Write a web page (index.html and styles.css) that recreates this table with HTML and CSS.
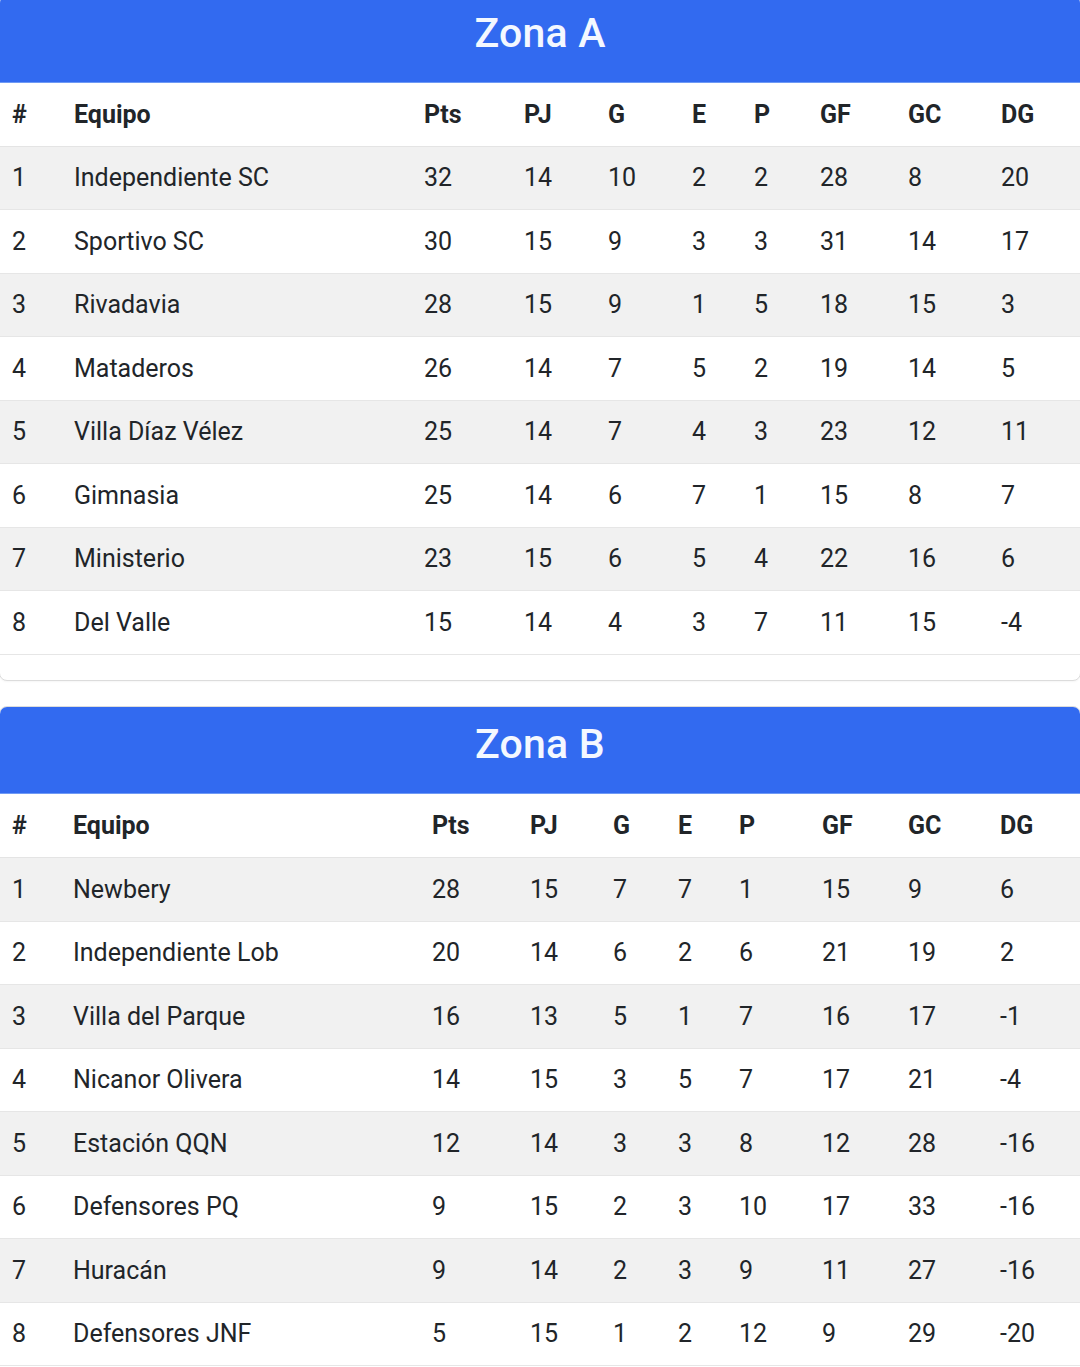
FILE: index.html
```html
<!DOCTYPE html>
<html lang="es">
<head>
<meta charset="utf-8">
<title>Posiciones</title>
<link rel="stylesheet" href="styles.css">
</head>
<body>
<main class="page">
  <section class="card zona-a">
    <header class="card-header"><h2>Zona A</h2></header>
    <table class="standings">
      <thead>
        <tr><th>#</th><th>Equipo</th><th>Pts</th><th>PJ</th><th>G</th><th>E</th><th>P</th><th>GF</th><th>GC</th><th>DG</th></tr>
      </thead>
      <tbody>
        <tr><td>1</td><td>Independiente SC</td><td>32</td><td>14</td><td>10</td><td>2</td><td>2</td><td>28</td><td>8</td><td>20</td></tr>
        <tr><td>2</td><td>Sportivo SC</td><td>30</td><td>15</td><td>9</td><td>3</td><td>3</td><td>31</td><td>14</td><td>17</td></tr>
        <tr><td>3</td><td>Rivadavia</td><td>28</td><td>15</td><td>9</td><td>1</td><td>5</td><td>18</td><td>15</td><td>3</td></tr>
        <tr><td>4</td><td>Mataderos</td><td>26</td><td>14</td><td>7</td><td>5</td><td>2</td><td>19</td><td>14</td><td>5</td></tr>
        <tr><td>5</td><td>Villa Díaz Vélez</td><td>25</td><td>14</td><td>7</td><td>4</td><td>3</td><td>23</td><td>12</td><td>11</td></tr>
        <tr><td>6</td><td>Gimnasia</td><td>25</td><td>14</td><td>6</td><td>7</td><td>1</td><td>15</td><td>8</td><td>7</td></tr>
        <tr><td>7</td><td>Ministerio</td><td>23</td><td>15</td><td>6</td><td>5</td><td>4</td><td>22</td><td>16</td><td>6</td></tr>
        <tr><td>8</td><td>Del Valle</td><td>15</td><td>14</td><td>4</td><td>3</td><td>7</td><td>11</td><td>15</td><td>-4</td></tr>
      </tbody>
    </table>
  </section>

  <section class="card zona-b">
    <header class="card-header"><h2>Zona B</h2></header>
    <table class="standings">
      <thead>
        <tr><th>#</th><th>Equipo</th><th>Pts</th><th>PJ</th><th>G</th><th>E</th><th>P</th><th>GF</th><th>GC</th><th>DG</th></tr>
      </thead>
      <tbody>
        <tr><td>1</td><td>Newbery</td><td>28</td><td>15</td><td>7</td><td>7</td><td>1</td><td>15</td><td>9</td><td>6</td></tr>
        <tr><td>2</td><td>Independiente Lob</td><td>20</td><td>14</td><td>6</td><td>2</td><td>6</td><td>21</td><td>19</td><td>2</td></tr>
        <tr><td>3</td><td>Villa del Parque</td><td>16</td><td>13</td><td>5</td><td>1</td><td>7</td><td>16</td><td>17</td><td>-1</td></tr>
        <tr><td>4</td><td>Nicanor Olivera</td><td>14</td><td>15</td><td>3</td><td>5</td><td>7</td><td>17</td><td>21</td><td>-4</td></tr>
        <tr><td>5</td><td>Estación QQN</td><td>12</td><td>14</td><td>3</td><td>3</td><td>8</td><td>12</td><td>28</td><td>-16</td></tr>
        <tr><td>6</td><td>Defensores PQ</td><td>9</td><td>15</td><td>2</td><td>3</td><td>10</td><td>17</td><td>33</td><td>-16</td></tr>
        <tr><td>7</td><td>Huracán</td><td>9</td><td>14</td><td>2</td><td>3</td><td>9</td><td>11</td><td>27</td><td>-16</td></tr>
        <tr><td>8</td><td>Defensores JNF</td><td>5</td><td>15</td><td>1</td><td>2</td><td>12</td><td>9</td><td>29</td><td>-20</td></tr>
      </tbody>
    </table>
  </section>
</main>
</body>
</html>
```

FILE: styles.css
```css
* { box-sizing: border-box; }

html, body {
  margin: 0;
  padding: 0;
  background: #ffffff;
}

body {
  font-family: Roboto, "Noto Sans", "Liberation Sans", sans-serif;
  color: #212529;
  overflow: hidden;
}

.page {
  display: flex;
  flex-direction: column;
  gap: 25px;
  margin-top: -5px;
}

.card {
  background: #ffffff;
  border: 1px solid #dcdcdc;
  border-radius: 8px;
  overflow: hidden;
  margin: 0 -1px;
  box-shadow: 0 1px 2px rgba(0, 0, 0, 0.04);
}

.card-header {
  background: #326af0;
  height: 87px;
  display: flex;
  align-items: center;
  justify-content: center;
  padding-bottom: 12px;
  border-bottom: 1px solid #6f9af5;
}

.card-header h2 {
  margin: 0;
  color: #f4f8ff;
  font-size: 41px;
  font-weight: 500;
  letter-spacing: 0.2px;
}

.standings {
  width: 1080px;
  border-collapse: collapse;
  table-layout: fixed;
  font-size: 25px;
  margin-bottom: 25px;
}

.standings th,
.standings td {
  padding: 0 0 0 12px;
  text-align: left;
  white-space: nowrap;
}

.standings th {
  height: 63px;
  font-weight: 700;
  border-bottom: 1px solid #e4e4e4;
}

.standings td {
  height: 63.5px;
  font-weight: 400;
  border-bottom: 1px solid #e6e6e6;
}

.zona-b .standings th {
  height: 64px;
}

.standings tbody tr:nth-child(odd) {
  background: #f1f1f1;
}

/* Zona A column widths */
.zona-a th:nth-child(1) { width: 62px; }
.zona-a th:nth-child(2) { width: 350px; }
.zona-a th:nth-child(3) { width: 100px; }
.zona-a th:nth-child(4) { width: 84px; }
.zona-a th:nth-child(5) { width: 84px; }
.zona-a th:nth-child(6) { width: 62px; }
.zona-a th:nth-child(7) { width: 66px; }
.zona-a th:nth-child(8) { width: 88px; }
.zona-a th:nth-child(9) { width: 93px; }
.zona-a th:nth-child(10) { width: 91px; }

/* Zona B column widths */
.zona-b th:nth-child(1) { width: 61px; }
.zona-b th:nth-child(2) { width: 359px; }
.zona-b th:nth-child(3) { width: 98px; }
.zona-b th:nth-child(4) { width: 83px; }
.zona-b th:nth-child(5) { width: 65px; }
.zona-b th:nth-child(6) { width: 61px; }
.zona-b th:nth-child(7) { width: 83px; }
.zona-b th:nth-child(8) { width: 86px; }
.zona-b th:nth-child(9) { width: 92px; }
.zona-b th:nth-child(10) { width: 92px; }
```
